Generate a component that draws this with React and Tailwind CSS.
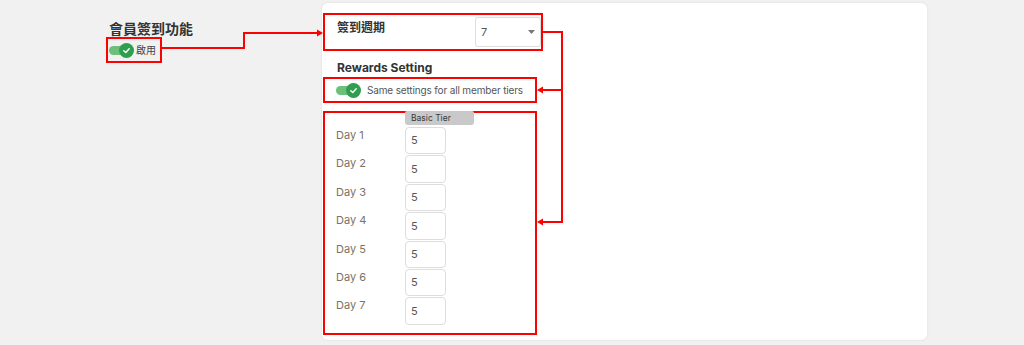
import React from "react";

const days = [1, 2, 3, 4, 5, 6, 7];

function Toggle() {
    return (
        <div className="relative w-[25px] h-[15px] shrink-0">
            <div className="absolute left-0 top-[3px] w-[20px] h-[9px] rounded-full bg-[#6cc07a]" />
            <div className="absolute right-0 top-0 w-[15px] h-[15px] rounded-full bg-[#2f9e4e] flex items-center justify-center">
                <svg width="9" height="9" viewBox="0 0 10 10">
                    <path d="M2 5.2 L4.2 7.3 L8 3" fill="none" stroke="white" strokeWidth="1.6" strokeLinecap="round" strokeLinejoin="round" />
                </svg>
            </div>
        </div>
    );
}

export default function App() {
    return (
        <div className="relative w-[1024px] h-[345px] bg-[#f1f1f1] flex font-['Inter','Noto_Sans_CJK_TC',sans-serif] overflow-hidden">
            <div className="w-[322px] shrink-0 pl-[106px] pt-[20px]">
                <h2 className="pl-[3px] text-[14px] leading-[17px] font-bold text-[#333]">會員簽到功能</h2>
                <div className="w-[56px] h-[26px] border-2 border-[#ff0000] flex items-center pl-[1px] gap-[2px]">
                    <Toggle />
                    <span className="text-[10px] text-[#444]">啟用</span>
                </div>
            </div>

            <div className="mt-[3px] w-[605px] h-[337px] bg-white rounded-md shadow-[0_0_3px_rgba(0,0,0,0.08)] pl-[1px] pt-[10px]">
                <div className="w-[220px] h-[38px] border-2 border-[#ff0000] flex justify-between">
                    <div className="pl-[12px] pt-[4px] text-[12px] font-bold text-[#333]">簽到週期</div>
                    <div className="mt-[2px] w-[66px] h-[30px] border border-[#ddd] rounded-[3px] flex items-center justify-between pl-[5px] pr-[5px]">
                        <span className="text-[11px] text-[#555]">7</span>
                        <svg width="7" height="4" viewBox="0 0 7 4"><path d="M0 0 L7 0 L3.5 4 Z" fill="#777" /></svg>
                    </div>
                </div>

                <div className="pl-[14px] pt-[8px] h-[26px] text-[12px] font-bold text-[#333]">Rewards Setting</div>

                <div className="w-[214px] h-[26px] border-2 border-[#ff0000] flex items-center pl-[11px] gap-[6px]">
                    <Toggle />
                    <span className="whitespace-nowrap text-[10px] tracking-[-0.15px] text-[#555]">Same settings for all member tiers</span>
                </div>

                <div className="mt-[8px] w-[214px] h-[224px] border-2 border-[#ff0000] flex flex-col">
                    <div className="pl-[80px]">
                        <div className="w-[69px] h-[14px] -mt-[2px] rounded-b-[3px] rounded-t-[2px] bg-[#c9c9c9] text-[8.5px] leading-[14px] text-[#3a3a3a] pl-[6px]">Basic Tier</div>
                    </div>
                    <div className="mt-[2px] flex flex-col">
                        {days.map(d => (
                            <div key={d} className="flex h-[28.4px]">
                                <div className="w-[80px] pl-[11px] pt-[1px] text-[11px] leading-[14px] text-[#7b7264]">Day {d}</div>
                                <div className="w-[41px] h-[27.4px] border border-[#ddd] rounded-[4px] flex items-center pl-[5px] text-[11px] text-[#555]">5</div>
                            </div>
                        ))}
                    </div>
                </div>
            </div>

            <svg className="absolute inset-0 pointer-events-none" width="1024" height="345">
                <g fill="none" stroke="#ff0000" strokeWidth="2">
                    <path d="M162 48 H244 V33 H318" />
                    <path d="M543 32 H562 V222 H541" />
                    <path d="M562 90 H541" />
                </g>
                <g fill="#ff0000">
                    <path d="M323 33 L317 29.5 L317 36.5 Z" />
                    <path d="M537 90 L543 86.5 L543 93.5 Z" />
                    <path d="M537 222 L543 218.5 L543 225.5 Z" />
                </g>
            </svg>
        </div>
    );
}
